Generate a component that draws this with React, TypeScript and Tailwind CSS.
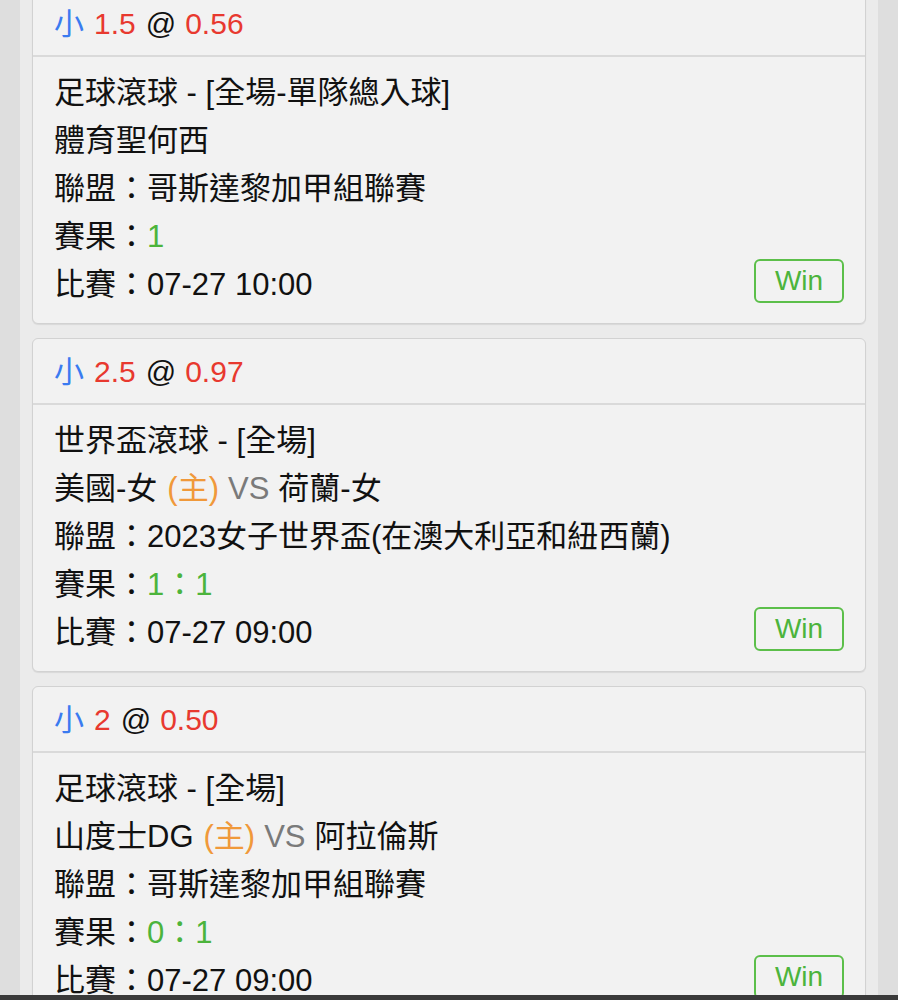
type Bet = {
  line: string;
  odds: string;
  title: string;
  home?: string;
  away?: string;
  team?: string;
  league: string;
  score: string;
  time: string;
};

const bets: Bet[] = [
  {
    line: "1.5",
    odds: "0.56",
    title: "足球滾球 - [全場-單隊總入球]",
    team: "體育聖何西",
    league: "哥斯達黎加甲組聯賽",
    score: "1",
    time: "07-27 10:00",
  },
  {
    line: "2.5",
    odds: "0.97",
    title: "世界盃滾球 - [全場]",
    home: "美國-女",
    away: "荷蘭-女",
    league: "2023女子世界盃(在澳大利亞和紐西蘭)",
    score: "1：1",
    time: "07-27 09:00",
  },
  {
    line: "2",
    odds: "0.50",
    title: "足球滾球 - [全場]",
    home: "山度士DG",
    away: "阿拉倫斯",
    league: "哥斯達黎加甲組聯賽",
    score: "0：1",
    time: "07-27 09:00",
  },
];

function BetCard({ bet }: { bet: Bet }) {
  return (
    <div className="bg-[#f2f2f2] border border-[#d2d2d2] rounded-[6px] shadow-[0_1px_1px_rgba(0,0,0,0.08)]">
      <div className="h-[66px] flex items-center px-[21px] border-b-2 border-[#dadada] text-[30px]">
        <span className="text-[#3a7bf0]">小</span>
        <span className="text-[#e8392f] ml-[10px]">{bet.line}</span>
        <span className="text-[#111] ml-[10px]">@</span>
        <span className="text-[#e8392f] ml-[9px]">{bet.odds}</span>
      </div>
      <div className="px-[21px] pt-[12px] pb-[14px] text-[31px] text-[#111]">
        <div className="h-[48px] flex items-center whitespace-nowrap">{bet.title}</div>
        <div className="h-[48px] flex items-center whitespace-nowrap">
          {bet.team ? (
            bet.team
          ) : (
            <>
              {bet.home}
              <span className="text-[#f0993a] ml-[10px]">(主)</span>
              <span className="text-[#7a7a7a] ml-[9px]">VS</span>
              <span className="ml-[9px]">{bet.away}</span>
            </>
          )}
        </div>
        <div className="h-[48px] flex items-center whitespace-nowrap">聯盟：{bet.league}</div>
        <div className="h-[48px] flex items-center whitespace-nowrap">
          賽果：<span className="text-[#4cb43c]">{bet.score}</span>
        </div>
        <div className="h-[48px] flex items-center justify-between whitespace-nowrap">
          <span>比賽：{bet.time}</span>
          <span className="w-[90px] h-[44px] -mt-[8px] flex items-center justify-center border-2 border-[#5cbf4a] rounded-[6px] text-[#4cb43c] text-[28px]">
            Win
          </span>
        </div>
      </div>
    </div>
  );
}

export default function App() {
  return (
    <div
      className="min-h-screen bg-[#dedede] px-[20px] overflow-hidden"
      style={{ fontFamily: '"Liberation Sans", "Noto Sans CJK TC", sans-serif' }}
    >
      <div className="bg-[#ebebeb] min-h-screen px-[12px]">
        <div className="-mt-[10px] flex flex-col gap-[14px] pb-[20px]">
          {bets.map((b, i) => (
            <BetCard key={i} bet={b} />
          ))}
        </div>
      </div>
      <div className="fixed left-0 right-0 bottom-0 h-[5px] bg-[#3a3a3a]" />
    </div>
  );
}
